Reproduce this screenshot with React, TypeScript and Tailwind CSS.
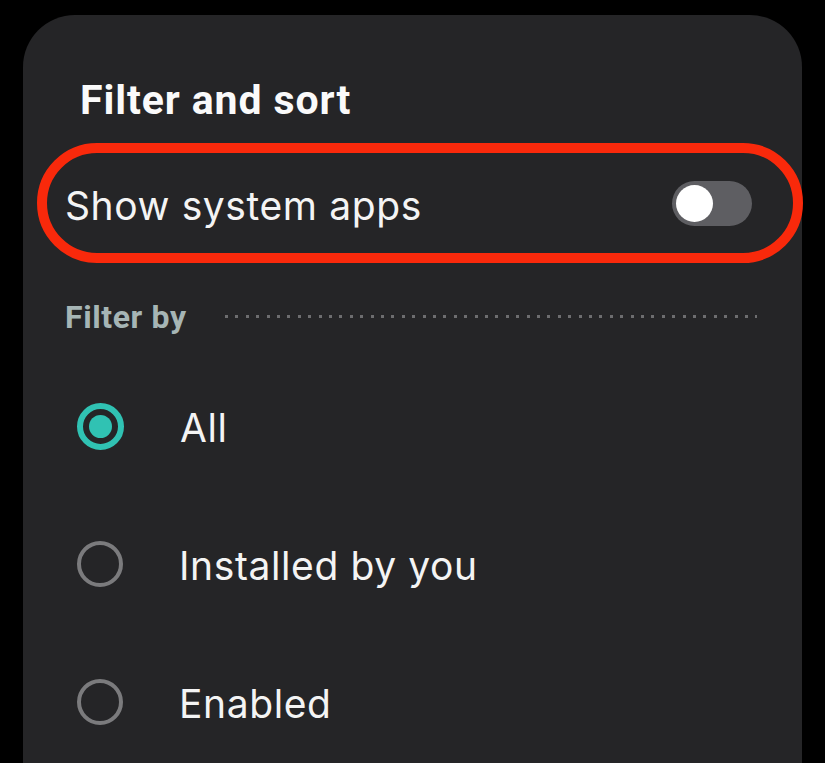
import React, { useState } from 'react';

const options = ['All', 'Installed by you', 'Enabled'];

const Radio = ({ checked }: { checked: boolean }) =>
    checked ? (
        <div className="w-[47px] h-[47px] rounded-full border-[6px] border-[#30c2b3] flex items-center justify-center shrink-0">
            <div className="w-[23px] h-[23px] rounded-full bg-[#30c2b3]" />
        </div>
    ) : (
        <div className="w-[46px] h-[46px] rounded-full border-[4px] border-[#7b7b7d] shrink-0" />
    );

export default function App() {
    const [selected, setSelected] = useState('All');
    const [showSystem, setShowSystem] = useState(false);

    return (
        <div className="w-full h-[763px] bg-black overflow-hidden pt-[15px] px-[23px]">
            <div className="bg-[#252527] rounded-[52px] h-[800px] text-[#f4f4f4] font-['Inter',sans-serif]">
                {/* Header */}
                <div className="pt-[65px] pl-[57px] font-['Roboto',sans-serif] font-bold text-[41px] leading-[41px] tracking-[0.9px] text-[#fafafa]">
                    Filter and sort
                </div>

                {/* Highlighted toggle row */}
                <div className="mt-[22px] ml-[14px] -mr-[1px] h-[120px] rounded-[60px] border-[10px] border-[#f9290b] flex items-center justify-between pl-[18px] pr-[41px]">
                    <span className="text-[39px] leading-[39px] tracking-[0.6px] pt-[4px]">Show system apps</span>
                    <button
                        onClick={() => setShowSystem(!showSystem)}
                        className={`w-[80px] h-[45px] rounded-full p-[4px] flex ${showSystem ? 'bg-[#30c2b3] justify-end' : 'bg-[#5e5e62] justify-start'}`}
                    >
                        <div className="w-[37px] h-[37px] rounded-full bg-white" />
                    </button>
                </div>

                {/* Section label */}
                <div className="mt-[30px] h-[47px] flex items-center pl-[42px] pr-[45px]">
                    <span className="font-['Roboto',sans-serif] font-bold text-[32px] leading-[32px] tracking-[0.6px] text-[#a6b5b5]">Filter by</span>
                    <div className="flex-1 ml-[38px] h-[3px] bg-[repeating-linear-gradient(90deg,#6d6d6f_0_3px,transparent_3px_10.4px)]" />
                </div>

                {/* Options */}
                <div className="mt-[17px] flex flex-col">
                    {options.map((o) => (
                        <div key={o} onClick={() => setSelected(o)} className="h-[138px] flex items-center pl-[54px]">
                            <Radio checked={selected === o} />
                            <span className="ml-[56px] text-[39px] leading-[39px] tracking-[0.6px] pt-[3px]">{o}</span>
                        </div>
                    ))}
                </div>
            </div>
        </div>
    );
}
